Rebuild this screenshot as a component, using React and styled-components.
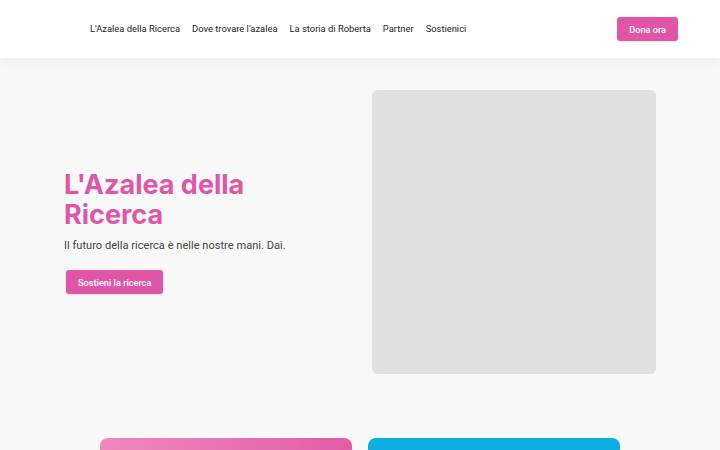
import React from 'react';
import styled, { createGlobalStyle } from 'styled-components';

const GlobalStyle = createGlobalStyle`
  body {
    margin: 0;
    background: #f8f8f8;
    font-family: Roboto, "Noto Sans", sans-serif;
    color: #333;
  }
`;

const Header = styled.header`
  height: 58px;
  background: #fff;
  box-shadow: 0 2px 10px rgba(0, 0, 0, 0.06);
  display: flex;
  align-items: center;
  justify-content: space-between;
  padding: 0 42px 0 90px;
  position: relative;
  z-index: 1;
`;

const Nav = styled.nav`
  display: flex;
  gap: 12px;
  margin-top: -2px;
`;

const NavLink = styled.a`
  font-size: 9.4px;
  color: #222;
  text-decoration: none;
`;

const PinkButton = styled.a`
  display: inline-flex;
  align-items: center;
  justify-content: center;
  background: #e055a6;
  color: #fff;
  font-weight: 500;
  font-size: 9.2px;
  border-radius: 3px;
  text-decoration: none;
  height: 24px;
  padding: 0 12px;
  box-shadow: 0 1px 2px rgba(0, 0, 0, 0.1);
`;

const HeroButton = styled(PinkButton)`
  margin-left: 2px;
`;

const Hero = styled.section`
  display: grid;
  grid-template-columns: 1fr 1fr;
  gap: 24px;
  align-items: center;
  width: 592px;
  margin: 0 auto;
  padding: 32px 0;
`;

const HeroText = styled.div`
  display: flex;
  flex-direction: column;
  align-items: flex-start;
`;

const Title = styled.h1`
  margin: 0;
  font-family: Inter, "Noto Sans", sans-serif;
  font-size: 27px;
  line-height: 30px;
  font-weight: 700;
  color: #e055a6;
`;

const Lead = styled.p`
  margin: 9px 0 17px;
  font-size: 11.1px;
  line-height: 14px;
  color: #444;
`;

const ImagePlaceholder = styled.div`
  height: 284px;
  background: #e0e0e0;
  border-radius: 6px;
`;

const Cards = styled.section`
  display: flex;
  justify-content: center;
  gap: 16px;
  padding-top: 32px;
`;

const Card = styled.div`
  width: 252px;
  height: 140px;
  border-radius: 8px;
  background: ${(p) => p.$bg};
`;

const links = [
  "L'Azalea della Ricerca",
  "Dove trovare l'azalea",
  'La storia di Roberta',
  'Partner',
  'Sostienici',
];

export default function App() {
  return (
    <>
      <GlobalStyle />
      <Header>
        <Nav>
          {links.map((l) => (
            <NavLink key={l} href="#">
              {l}
            </NavLink>
          ))}
        </Nav>
        <PinkButton href="#">Dona ora</PinkButton>
      </Header>
      <Hero>
        <HeroText>
          <Title>
            L'Azalea della
            <br />
            Ricerca
          </Title>
          <Lead>Il futuro della ricerca è nelle nostre mani. Dai.</Lead>
          <HeroButton href="#">Sostieni la ricerca</HeroButton>
        </HeroText>
        <ImagePlaceholder />
      </Hero>
      <Cards>
        <Card $bg="linear-gradient(90deg, #ee89bd, #e25ca8)" />
        <Card $bg="#0eade0" />
      </Cards>
    </>
  );
}
